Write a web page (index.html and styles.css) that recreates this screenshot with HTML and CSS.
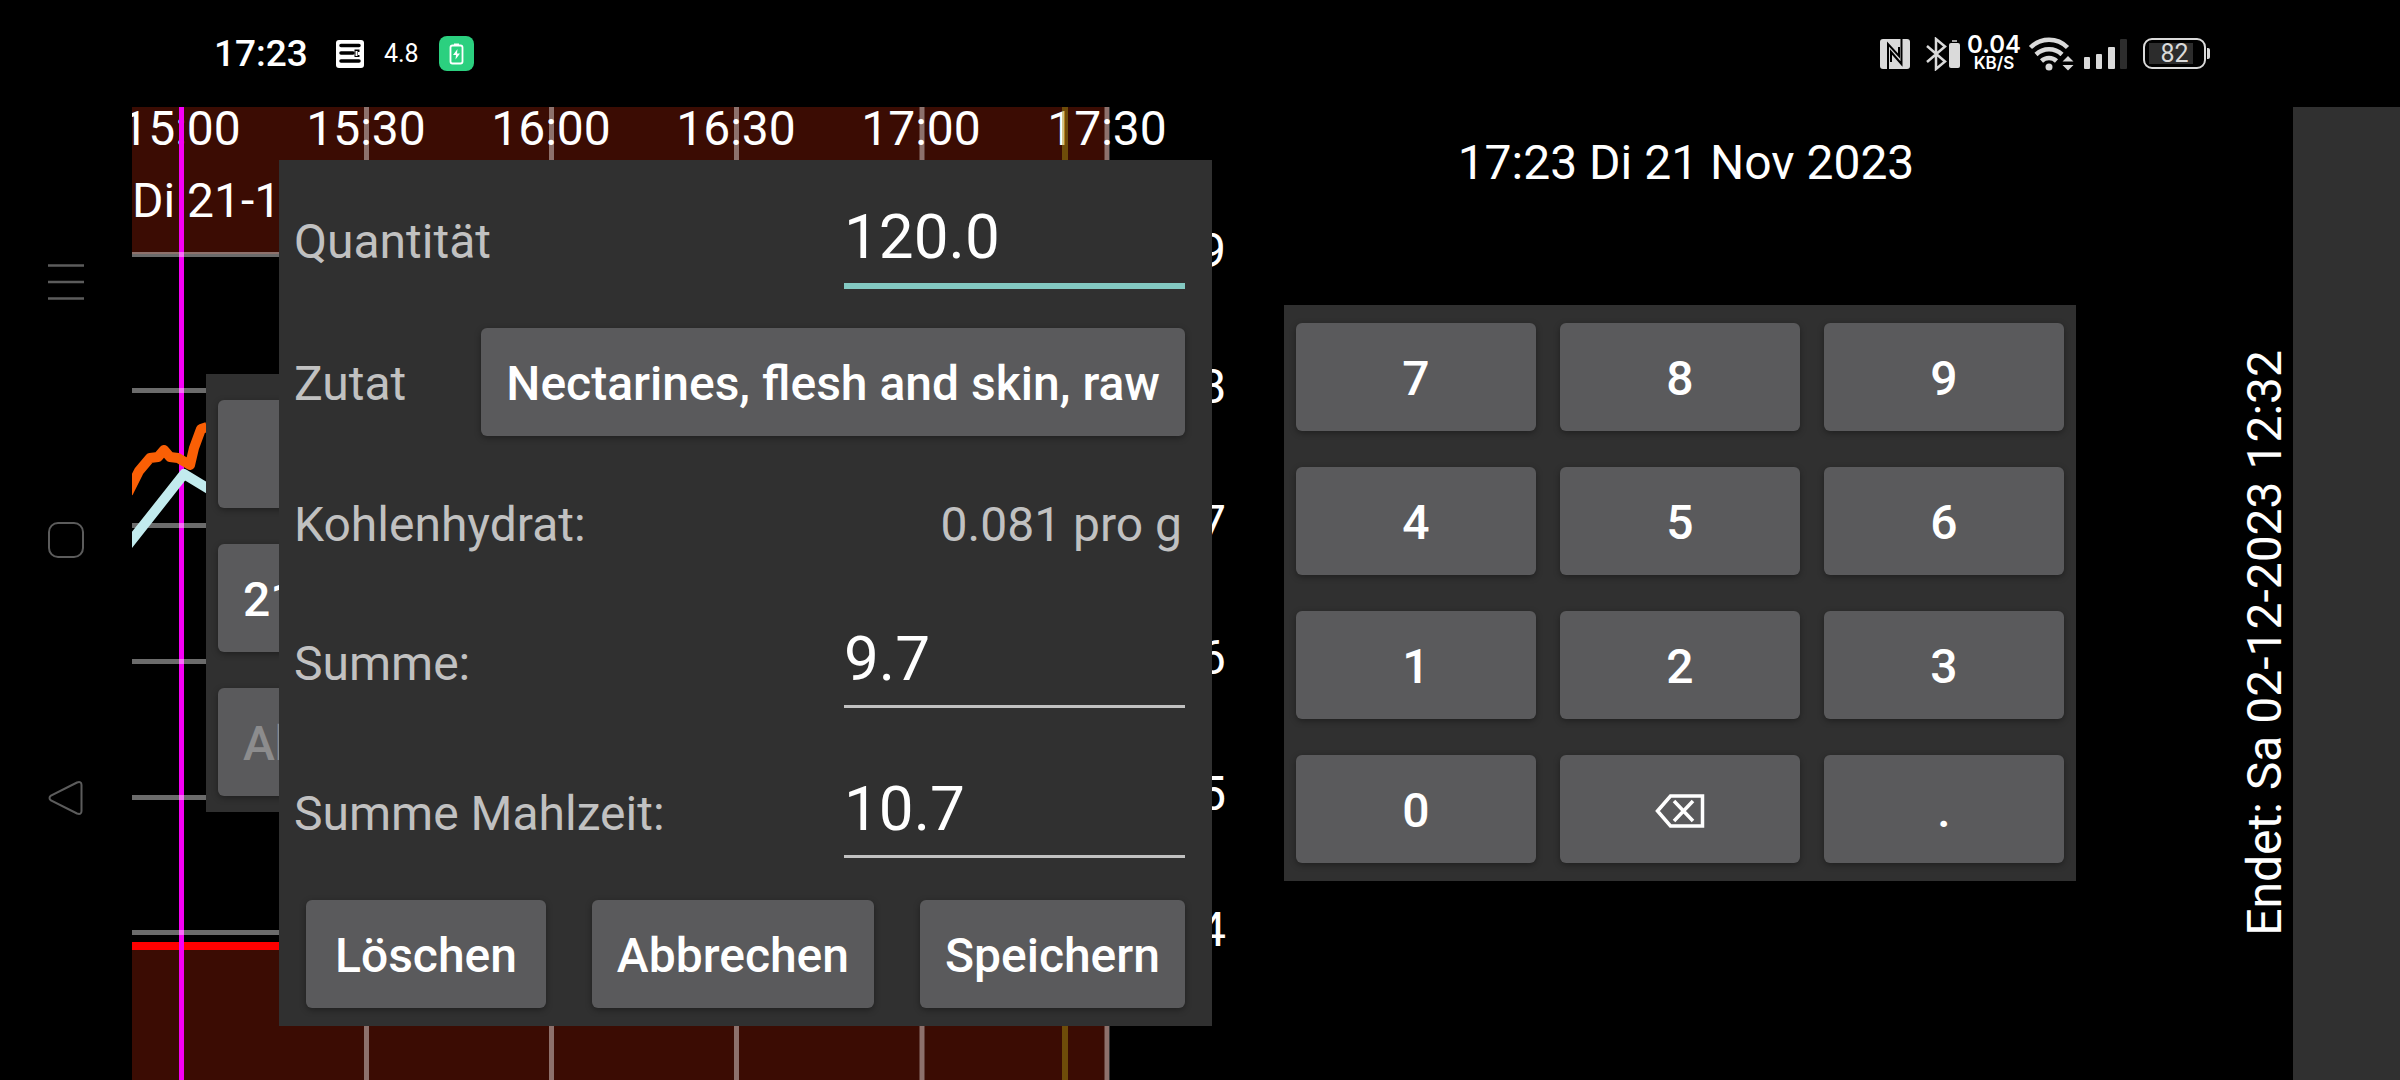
FILE: index.html
```
<!DOCTYPE html>
<html lang="de">
<head>
<meta charset="utf-8">
<meta name="viewport" content="width=device-width, initial-scale=1">
<title>Mahlzeit</title>
<link rel="stylesheet" href="styles.css">
</head>
<body>
<header class="status">
  <div class="status-group">
    <span class="clock">17:23</span>
    <svg class="notice-icon" width="28" height="28" viewBox="0 0 28 28" aria-hidden="true">
      <rect width="28" height="28" rx="3" fill="#fff"/>
      <path d="M5 5.500H23M5 13H17M5 21H23" stroke="#000" stroke-width="3.500" stroke-linecap="round"/>
      <path d="M21 9.500V17" stroke="#000" stroke-width="5"/>
      <path d="M20.500 11v5" stroke="#fff" stroke-width="2"/>
      <path d="M22 13.500h4" stroke="#fff" stroke-width="3"/>
    </svg>
    <span class="reading">4.8</span>
    <svg width="35" height="35" viewBox="0 0 35 35" aria-hidden="true">
      <rect width="35" height="35" rx="8" fill="#2bd07f"/>
      <rect x="11.500" y="9.500" width="12" height="18" rx="2" fill="none" stroke="#fff" stroke-width="1.800"/>
      <path d="M15 7.500h5v2h-5z" fill="#fff"/>
      <path d="M18.500 13l-4.500 6h3l-.5 4.500 4.500-6h-3z" fill="#fff"/>
    </svg>
  </div>
  <div class="status-group status-right">
    <svg width="38" height="34" viewBox="0 0 38 34" aria-hidden="true">
      <rect y="2" width="30" height="30" rx="3" fill="#dadada"/>
      <path d="M8 32V7l11 12V10M21.500 2v25L11 15v10" fill="none" stroke="#000" stroke-width="2"/>
    </svg>
    <svg width="34" height="34" viewBox="0 0 34 34" aria-hidden="true">
      <path d="M1 9l18 15.500L10 32V2l9 7.500L1 25" fill="none" stroke="#dadada" stroke-width="2.500"/>
      <rect x="23" y="6" width="11" height="25" rx="2" fill="#dadada"/>
      <path d="M26 4h5" stroke="#dadada" stroke-width="1.500"/>
    </svg>
    <div class="net"><span class="net-value">0.04</span><span class="net-unit">KB/S</span></div>
    <svg width="46" height="36" viewBox="0 0 46 36" aria-hidden="true">
      <g fill="none" stroke="#dadada" stroke-width="4.500">
        <path d="M2.500 11.500a26 26 0 0 1 37 0"/>
        <path d="M8 18.500a19 19 0 0 1 26 0"/>
        <path d="M13.500 25a11 11 0 0 1 15 0"/>
      </g>
      <circle cx="21" cy="31" r="3.500" fill="#dadada"/>
      <path d="M32 20h14v16H32z" fill="#000"/>
      <path d="M34.500 25.500l5.500-5.500 5.500 5.500zM34.500 29l5.500 5.500 5.500-5.500z" fill="#dadada"/>
    </svg>
    <svg width="50" height="34" viewBox="0 0 50 34" aria-hidden="true">
      <g fill="#dadada"><rect x="2" y="20" width="6" height="12" rx="1"/><rect x="14" y="17" width="6" height="15" rx="1"/><rect x="26" y="10" width="7" height="22" rx="1"/></g>
      <rect x="38" y="2" width="7" height="30" rx="1" fill="#2d2d2d"/>
    </svg>
    <div class="battery">82</div>
  </div>
</header>

<main class="screen">
  <nav class="rail">
    <button class="rail-btn" aria-label="Menü"><svg width="36" height="36" viewBox="0 0 36 36"><path d="M0 1.500h36M0 18h36M0 34.500h36" stroke="#5c5c5c" stroke-width="2.500"/></svg></button>
    <button class="rail-btn" aria-label="Start"><svg width="36" height="36" viewBox="0 0 36 36"><rect x="1" y="1" width="34" height="34" rx="9" fill="none" stroke="#5c5c5c" stroke-width="2"/></svg></button>
    <button class="rail-btn" aria-label="Zurück"><svg width="36" height="36" viewBox="0 0 36 36"><path d="M29 2.500L3 15.500Q0 18 3 20.500L29 33.500Q33.500 35 33.500 31V5Q33.500 1 29 2.500z" fill="none" stroke="#5c5c5c" stroke-width="2"/></svg></button>
  </nav>

  <section class="plot">
    <svg class="chart" role="img" aria-label="Glukoseverlauf">
      <rect width="977" height="147" fill="#3b0c03"/>
      <rect y="842" width="977" height="200" fill="#3b0c03"/>
      <g stroke="#fff" stroke-opacity=".42" stroke-width="5">
        <path d="M234.500 0V1200M419.500 0V1200M604.500 0V1200M790 0V1200M975 0V1200"/>
      </g>
      <path d="M0 839H977" stroke="#f00" stroke-width="8"/>
      <g class="chart-text" text-anchor="middle">
        <text x="49" y="38">15:00</text><text x="234" y="38">15:30</text><text x="419" y="38">16:00</text>
        <text x="604" y="38">16:30</text><text x="789" y="38">17:00</text><text x="975" y="38">17:30</text>
      </g>
      <g class="chart-text">
        <text x="0" y="110">Di 21-11-2023</text>
        <text x="1067" y="160">9</text><text x="1067" y="296">8</text><text x="1067" y="432">7</text>
        <text x="1067" y="567">6</text><text x="1067" y="703">5</text><text x="1067" y="839">4</text>
      </g>
      <path d="M933 0V1200" stroke="#a28c10" stroke-opacity=".5" stroke-width="6"/>
      <path d="M49.500 0V1200" stroke="#f600f6" stroke-width="5"/>
      <path d="M0 147.500H977M0 283.500H977M0 418.500H977M0 554.500H977M0 690.500H977M0 825.500H977" stroke="#fff" stroke-opacity=".42" stroke-width="5"/>
      <path d="M-4 386L0 378L7 364L18 351L26 350L32 343L38 350L46 351L58 358L62 341L69 322L75 320" fill="none" stroke="#fa5f05" stroke-width="10" stroke-linejoin="round"/>
      <path d="M-4 438L52 367L80 384" fill="none" stroke="#c2ebee" stroke-width="10" stroke-linejoin="round"/>
    </svg>

    <div class="meal">
      <button class="btn" aria-label="Zutat wählen"></button>
      <button class="btn">21</button>
      <button class="btn" disabled>Abbrechen</button>
    </div>

    <form class="dialog">
      <div class="row">
        <label for="quantity">Quantität</label>
        <input class="field field-active" id="quantity" type="text" value="120.0">
      </div>
      <div class="row row-choice">
        <label for="ingredient">Zutat</label>
        <button class="btn" id="ingredient" type="button">Nectarines, flesh and skin, raw</button>
      </div>
      <div class="row row-info">
        <span>Kohlenhydrat:</span>
        <span class="info-value">0.081 pro g</span>
      </div>
      <div class="row">
        <label for="sum">Summe:</label>
        <input class="field" id="sum" type="text" value="9.7">
      </div>
      <div class="row">
        <label for="meal-sum">Summe Mahlzeit:</label>
        <input class="field" id="meal-sum" type="text" value="10.7">
      </div>
      <div class="actions">
        <button class="btn btn-wide" type="button">Löschen</button>
        <button class="btn" type="button">Abbrechen</button>
        <button class="btn" type="button">Speichern</button>
      </div>
    </form>
  </section>

  <section class="entry">
    <p class="now">17:23 Di 21 Nov 2023</p>
    <div class="keypad">
      <button class="btn">7</button><button class="btn">8</button><button class="btn">9</button>
      <button class="btn">4</button><button class="btn">5</button><button class="btn">6</button>
      <button class="btn">1</button><button class="btn">2</button><button class="btn">3</button>
      <button class="btn">0</button>
      <button class="btn" aria-label="Löschen"><svg width="50" height="34" viewBox="0 0 50 34"><path d="M2.500 17L15.500 2H47.500V32H15.500zM19 7L38 27M38 7L19 27" fill="none" stroke="#fff" stroke-width="3.500"/></svg></button>
      <button class="btn">.</button>
    </div>
  </section>

  <p class="ends">Endet: Sa 02-12-2023 12:32</p>
  <aside class="edge"></aside>
</main>
</body>
</html>
```
FILE: styles.css
```
* {
  box-sizing: border-box;
}

body {
  margin: 0;
  min-height: 100vh;
  display: flex;
  flex-direction: column;
  background: #000;
  color: #fff;
  font: 48px/56px Roboto, sans-serif;
  overflow: hidden;
}

p {
  margin: 0;
}

svg {
  display: block;
}

button {
  border: 0;
  padding: 0;
  background: none;
  color: inherit;
  font: inherit;
}

/* Status bar */
.status {
  height: 107px;
  flex: none;
  display: flex;
  align-items: center;
  justify-content: space-between;
  padding: 0 190px 0 214px;
}

.status-group {
  display: flex;
  align-items: center;
  gap: 20px;
}

.status-right {
  gap: 8px;
}

.clock {
  font-size: 37px;
  font-weight: 500;
}

.notice-icon {
  margin-left: 8px;
}

.reading {
  font-size: 25px;
}

.net {
  width: 52px;
  display: flex;
  flex-direction: column;
  align-items: center;
  font-family: Inter, sans-serif;
  font-weight: 600;
}

.net-value {
  font-size: 24px;
  line-height: 20px;
}

.net-unit {
  font-size: 17px;
  line-height: 17px;
}

.battery {
  position: relative;
  width: 63px;
  height: 31px;
  margin: 0 4px 0 3px;
  border: 2px solid #dadada;
  border-radius: 9px;
  background: linear-gradient(#2c2c2c, #2c2c2c) 4px 3px / 44px 21px no-repeat;
  color: #dadada;
  font-size: 25px;
  line-height: 28px;
  text-align: center;
}

.battery::after {
  content: "";
  position: absolute;
  left: 62px;
  top: 8px;
  width: 3px;
  height: 11px;
  border-radius: 0 2px 2px 0;
  background: #dadada;
}

/* Main screen */
.screen {
  flex: 1;
  display: flex;
}

.rail {
  width: 132px;
  flex: none;
  display: flex;
  flex-direction: column;
  align-items: center;
  gap: 222px;
  padding-top: 157px;
}

.rail-btn {
  width: 36px;
  height: 36px;
}

.plot {
  position: relative;
  flex: 0 0 48%;
}

.chart {
  width: 100%;
  height: 100%;
}

.chart-text {
  fill: #fff;
}

.btn {
  min-width: 168px;
  height: 108px;
  padding: 4px 25px 0;
  border-radius: 6px;
  background: #5a5a5c;
  box-shadow: 0 2px 6px rgba(0, 0, 0, .35);
  color: #fff;
  font-weight: 500;
  white-space: nowrap;
}

.btn:disabled {
  color: #8c8c8d;
}

/* Meal list behind the dialog */
.meal {
  position: absolute;
  left: 74px;
  top: 267px;
  width: 400px;
  display: flex;
  flex-direction: column;
  gap: 36px;
  padding: 26px 12px 16px;
  background: #303030;
}

.meal .btn {
  text-align: left;
}

/* Ingredient dialog */
.dialog {
  position: absolute;
  left: 147px;
  top: 53px;
  width: 933px;
  padding: 0 27px 0 15px;
  background: #303030;
  color: #c1c1c1;
}

.row {
  height: 150px;
  display: flex;
  align-items: baseline;
  justify-content: space-between;
  padding-top: 41px;
}

.row-choice {
  height: 144px;
  padding-top: 18px;
}

.row-info {
  height: 128px;
  padding-top: 43px;
}

.info-value {
  padding-right: 3px;
}

.field {
  width: 341px;
  height: 85px;
  padding: 0 0 12px;
  border: 0;
  border-bottom: 3px solid #c1c1c1;
  background: none;
  color: #fff;
  font: 62px/70px Roboto, sans-serif;
  outline: 0;
}

.field-active {
  height: 88px;
  border-bottom: 6px solid #83c9c2;
}

.actions {
  height: 144px;
  display: flex;
  align-items: center;
  justify-content: space-between;
  padding-left: 12px;
}

.btn-wide {
  min-width: 240px;
}

/* Number entry */
.entry {
  flex: 0 0 33%;
}

.now {
  padding: 28px 0 0 12px;
  text-align: center;
}

.keypad {
  display: grid;
  grid-template-columns: repeat(3, 1fr);
  gap: 36px 24px;
  margin-top: 114px;
  padding: 18px 12px;
  background: #303030;
}

.keypad svg {
  margin: auto;
}

.ends {
  margin: 0 0 144px auto;
  align-self: flex-end;
  writing-mode: vertical-rl;
  transform: rotate(180deg);
  white-space: nowrap;
}

.edge {
  width: 107px;
  flex: none;
  background: #303030;
}
```
